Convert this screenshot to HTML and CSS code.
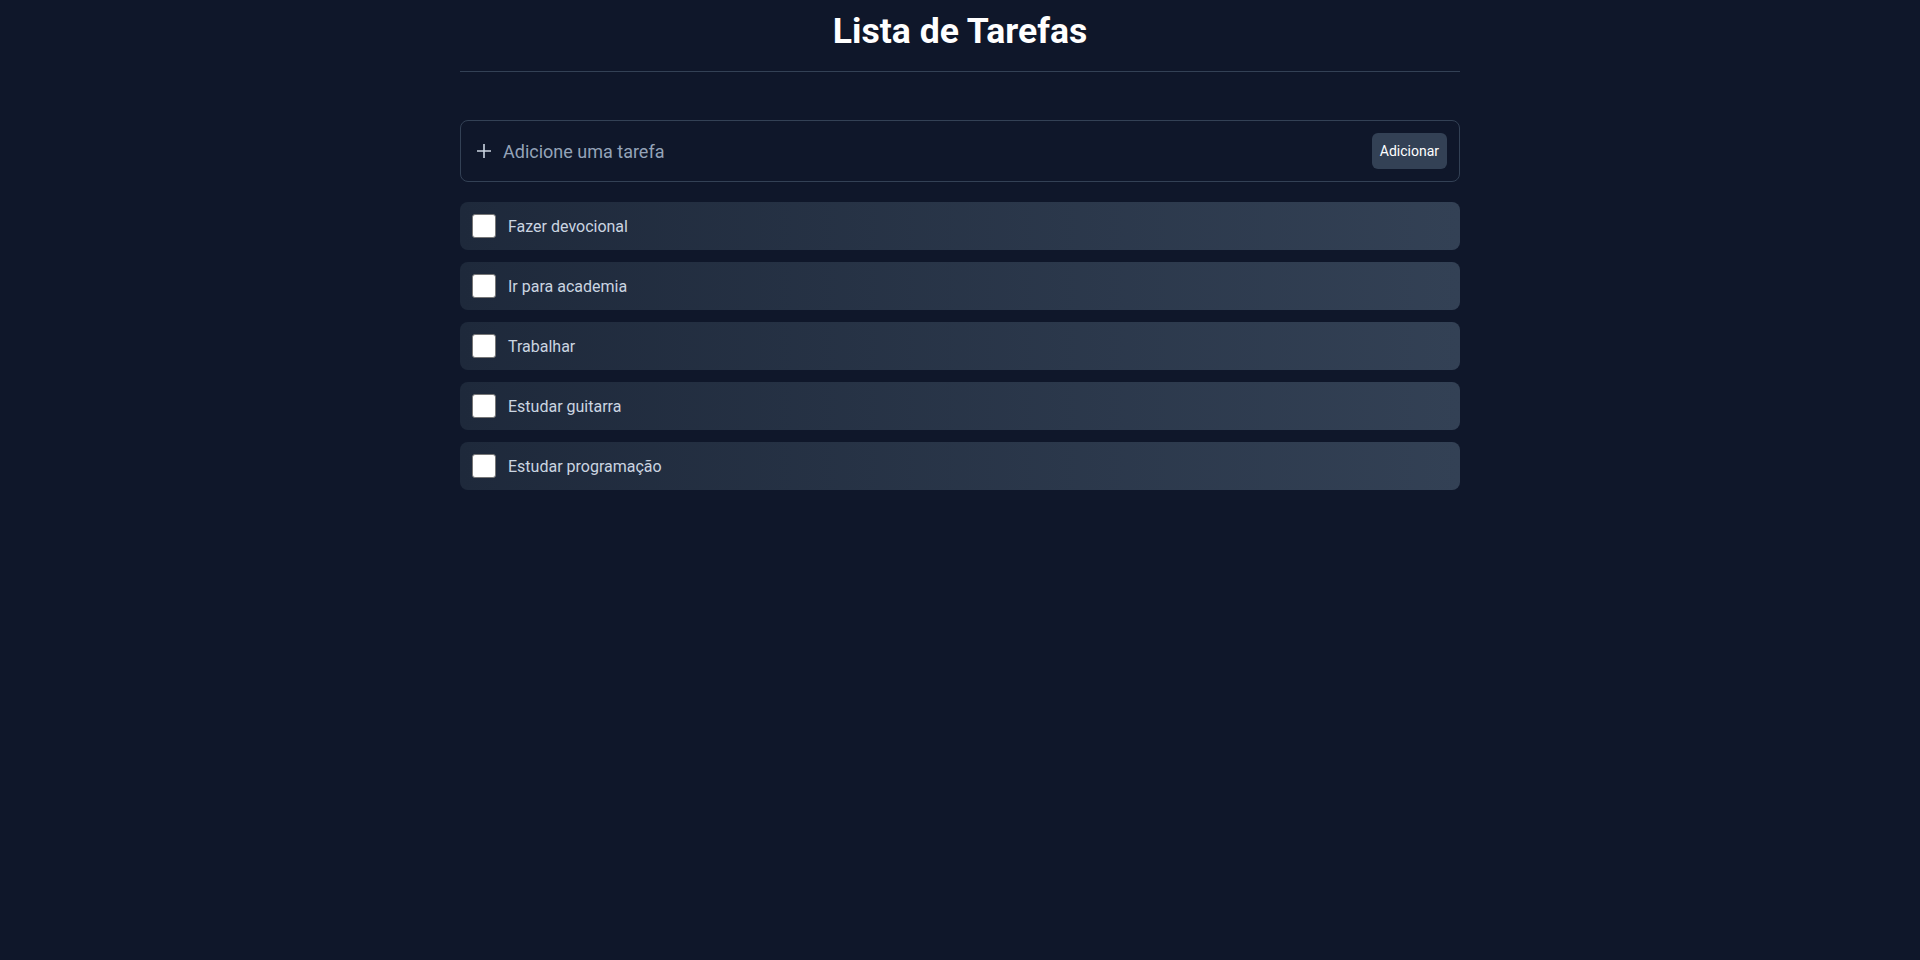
FILE: index.html
```html
<!DOCTYPE html>
<html lang="pt-BR">
<head>
<meta charset="utf-8">
<title>Lista de Tarefas</title>
<link rel="stylesheet" href="styles.css">
</head>
<body>
<main class="app">
  <header class="header">
    <h1 class="title">Lista de Tarefas</h1>
  </header>
  <form class="add-box">
    <svg class="plus" width="16" height="16" viewBox="0 0 16 16" aria-hidden="true"><path d="M8 1v14M1 8h14" stroke="#cbd5e1" stroke-width="1.6" fill="none"/></svg>
    <input class="add-input" type="text" placeholder="Adicione uma tarefa">
    <button class="add-btn" type="button">Adicionar</button>
  </form>
  <ul class="tasks">
    <li class="task"><span class="check"></span><span class="task-text">Fazer devocional</span></li>
    <li class="task"><span class="check"></span><span class="task-text">Ir para academia</span></li>
    <li class="task"><span class="check"></span><span class="task-text">Trabalhar</span></li>
    <li class="task"><span class="check"></span><span class="task-text">Estudar guitarra</span></li>
    <li class="task"><span class="check"></span><span class="task-text">Estudar programação</span></li>
  </ul>
</main>
</body>
</html>
```

FILE: styles.css
```css
* { box-sizing: border-box; }
html, body { margin: 0; padding: 0; }
body {
  background: #0f172a;
  font-family: Roboto, "Liberation Sans", sans-serif;
  color: #e2e8f0;
  min-height: 960px;
}
.app {
  width: 1000px;
  margin: 0 auto;
}
.header {
  padding: 11px 0 20px;
  border-bottom: 1px solid #334155;
}
.title {
  margin: 0;
  font-size: 35.6px;
  line-height: 40px;
  font-weight: 700;
  color: #ffffff;
  text-align: center;
}
.add-box {
  margin: 48px 0 0;
  height: 62px;
  border: 1px solid #334155;
  border-radius: 8px;
  display: flex;
  align-items: center;
  padding: 0 12px 0 15px;
}
.plus { flex: none; }
.add-input {
  flex: 1;
  margin-left: 11px;
  background: transparent;
  border: 0;
  outline: none;
  font-family: inherit;
  font-size: 18px;
  color: #e2e8f0;
  padding: 0;
}
.add-input::placeholder { color: #94a3b8; }
.add-btn {
  height: 36px;
  padding: 0 8px;
  border: 0;
  border-radius: 6px;
  background: #334155;
  color: #ffffff;
  font-family: inherit;
  font-size: 14px;
  font-weight: 400;
}
.tasks {
  list-style: none;
  margin: 20px 0 0;
  padding: 0;
  display: flex;
  flex-direction: column;
  gap: 12px;
}
.task {
  height: 48px;
  border-radius: 8px;
  background: linear-gradient(to right, #1e293b, #334155);
  display: flex;
  align-items: center;
  gap: 12px;
  padding: 0 12px;
}
.check {
  width: 24px;
  height: 24px;
  background: #ffffff;
  border: 1px solid #767676;
  border-radius: 3px;
  flex: none;
}
.task-text {
  font-size: 16px;
  color: #cbd5e1;
}
```
